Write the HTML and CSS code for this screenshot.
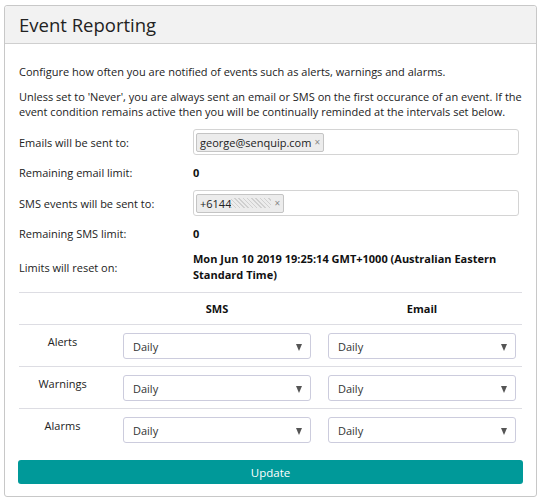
FILE: index.html
```html
<!DOCTYPE html>
<html>
<head>
<meta charset="utf-8">
<link rel="stylesheet" href="styles.css">
</head>
<body>
<div class="panel">
  <div class="panel-heading"><h2>Event Reporting</h2></div>
  <div class="panel-body">
    <p class="intro">Configure how often you are notified of events such as alerts, warnings and alarms.</p>
    <p class="intro">Unless set to 'Never', you are always sent an email or SMS on the first occurance of an event. If the event condition remains active then you will be continually reminded at the intervals set below.</p>

    <div class="form-grid">
      <div class="label">Emails will be sent to:</div>
      <div class="tag-input"><span class="tag">george@senquip.com <span class="x">×</span></span></div>

      <div class="label">Remaining email limit:</div>
      <div class="value">0</div>

      <div class="label">SMS events will be sent to:</div>
      <div class="tag-input"><span class="tag">+6144<span class="blur"></span> <span class="x">×</span></span></div>

      <div class="label">Remaining SMS limit:</div>
      <div class="value">0</div>

      <div class="label">Limits will reset on:</div>
      <div class="value two">Mon Jun 10 2019 19:25:14 GMT+1000 (Australian Eastern Standard Time)</div>
    </div>

    <div class="matrix">
      <div class="mrow head">
        <div></div>
        <div class="colhead">SMS</div>
        <div class="colhead">Email</div>
      </div>
      <div class="mrow">
        <div class="rlabel">Alerts</div>
        <div class="select">Daily</div>
        <div class="select">Daily</div>
      </div>
      <div class="mrow">
        <div class="rlabel">Warnings</div>
        <div class="select">Daily</div>
        <div class="select">Daily</div>
      </div>
      <div class="mrow last">
        <div class="rlabel">Alarms</div>
        <div class="select">Daily</div>
        <div class="select">Daily</div>
      </div>
    </div>

    <button class="btn">Update</button>
  </div>
</div>
</body>
</html>
```

FILE: styles.css
```css
html, body {
  margin: 0;
  padding: 0;
  background: #fff;
}
body {
  font-family: "Open Sans", "Noto Sans", sans-serif;
  font-size: 11px;
  color: #333;
  padding: 5px 5px 0 4px;
}
.panel {
  width: 531px;
  height: 490px;
  border: 1px solid #c8c8c8;
  border-radius: 3px;
  box-sizing: content-box;
}
.panel-heading {
  height: 37px;
  background: #f2f2f2;
  border-bottom: 1px solid #cfcfcf;
  display: flex;
  align-items: center;
  padding-left: 14px;
  border-radius: 3px 3px 0 0;
}
.panel-heading h2 {
  margin: 0;
  font-size: 18.5px;
  font-weight: 400;
  color: #222;
  line-height: 22px;
}
.panel-body {
  padding: 20px 14px 11px 14px;
}
.intro {
  margin: 0 0 10px 0;
  line-height: 15px;
  color: #222;
}
.form-grid {
  display: grid;
  grid-template-columns: 174px 326px;
  row-gap: 9px;
  align-items: center;
  margin-top: 10px;
}
.label {
  color: #222;
  line-height: 17px;
}
.value {
  font-weight: 700;
  color: #111;
  line-height: 17px;
}
.value.two {
  line-height: 16px;
}
.tag-input {
  height: 24px;
  border: 1px solid #d4d4d4;
  border-radius: 3px;
  display: flex;
  align-items: center;
  padding-left: 2px;
}
.tag {
  display: inline-flex;
  align-items: center;
  height: 17px;
  padding: 0 3px 0 3px;
  background: #ececec;
  border: 1px solid #c4c4c4;
  border-radius: 2px;
  color: #222;
  font-size: 11px;
}
.tag .x {
  color: #888;
  font-size: 10px;
  margin-left: 3px;
}
.blur {
  display: inline-block;
  width: 40px;
  height: 10px;
  background: repeating-linear-gradient(45deg, #d0d0d0 0 1px, #ececec 1px 3px);
}
.matrix {
  margin-top: 9px;
}
.mrow {
  display: grid;
  grid-template-columns: 87px 1fr 1fr;
  column-gap: 17px;
  padding-right: 6px;
  border-top: 1px solid #dddde3;
  height: 41px;
  box-sizing: content-box;
}
.mrow.head {
  height: 31px;
  align-items: center;
}
.colhead {
  text-align: center;
  font-weight: 700;
  color: #111;
}
.rlabel {
  text-align: center;
  padding-top: 8px;
  line-height: 17px;
  color: #222;
}
.select {
  margin-top: 8px;
  height: 24px;
  border: 1px solid #ccd;
  border-radius: 3px;
  display: flex;
  align-items: center;
  padding-left: 9px;
  color: #333;
  position: relative;
}
.select::after {
  content: "";
  position: absolute;
  right: 8px;
  top: 10px;
  border-left: 3.5px solid transparent;
  border-right: 3.5px solid transparent;
  border-top: 7px solid #555;
}
.btn {
  display: block;
  width: 505px;
  height: 24px;
  margin: 10px 0 0 -1px;
  background: #009999;
  color: #fff;
  border: none;
  border-radius: 3px;
  font-family: "Open Sans", "Noto Sans", sans-serif;
  font-size: 11.5px;
}
```
